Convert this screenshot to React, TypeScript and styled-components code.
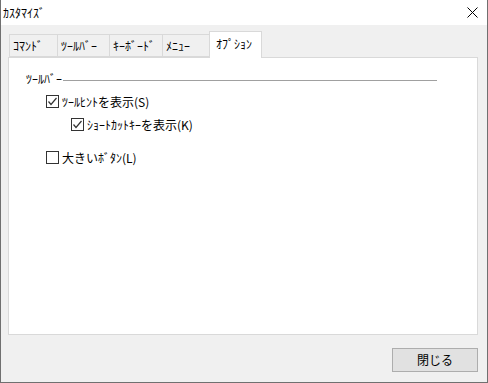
import styled, { createGlobalStyle } from "styled-components";

const GlobalStyle = createGlobalStyle`
  html, body {
    margin: 0;
    padding: 0;
    background: #ffffff;
  }
  body {
    font-family: "Noto Sans CJK JP", "Liberation Sans", sans-serif;
    font-size: 12px;
    color: #000;
  }
`;

const Window = styled.div`
  width: 488px;
  height: 383px;
  box-sizing: border-box;
  border: 1px solid #707070;
  border-top: none;
  display: flex;
  flex-direction: column;
  background: #f0f0f0;
`;

const TitleBar = styled.div`
  height: 25px;
  flex: none;
  background: #ffffff;
  display: flex;
  align-items: center;
  justify-content: space-between;
  padding: 0 9px 0 2px;
  font-size: 12px;
  line-height: 14px;
`;

const Body = styled.div`
  flex: 1;
  display: flex;
  flex-direction: column;
  padding: 6px 9px 0 7px;
`;

const TabRow = styled.div`
  display: flex;
  align-items: flex-end;
  height: 26px;
  flex: none;
  padding-left: 2px;
  position: relative;
  z-index: 1;
`;

const Tab = styled.div<{ $w: number; $active?: boolean }>`
  width: ${(p) => p.$w}px;
  height: ${(p) => (p.$active ? 27 : 23)}px;
  box-sizing: border-box;
  margin-left: -1px;
  margin-bottom: ${(p) => (p.$active ? -1 : 0)}px;
  border: 1px solid #d9d9d9;
  border-bottom: ${(p) => (p.$active ? "none" : "1px solid #d9d9d9")};
  background: ${(p) => (p.$active ? "#ffffff" : "#f0f0f0")};
  display: flex;
  align-items: ${(p) => (p.$active ? "flex-start" : "center")};
  padding: ${(p) => (p.$active ? "6px 0 0 6px" : "0 0 0 3px")};
  line-height: 12px;
  font-size: 12px;
  white-space: nowrap;
`;

const Panel = styled.div`
  height: 278px;
  flex: none;
  box-sizing: border-box;
  border: 1px solid #d9d9d9;
  background: #ffffff;
  padding: 15px 40px 0 17px;
  display: flex;
  flex-direction: column;
`;

const GroupHeader = styled.div`
  display: flex;
  align-items: center;
  height: 12px;
  font-size: 12px;
  line-height: 12px;
`;

const GroupLine = styled.div`
  flex: 1;
  height: 1px;
  background: #a0a0a0;
  margin-left: 1px;
  margin-top: 3px;
`;

const CheckRow = styled.label<{ $indent: number; $top: number }>`
  display: flex;
  align-items: center;
  gap: 3px;
  margin-left: ${(p) => p.$indent}px;
  margin-top: ${(p) => p.$top}px;
  height: 13px;
  line-height: 13px;
  font-size: 12px;
`;

const Box = styled.span`
  width: 13px;
  height: 13px;
  box-sizing: border-box;
  border: 1px solid #333333;
  background: #ffffff;
  display: flex;
  align-items: center;
  justify-content: center;
  flex: none;
`;

const Footer = styled.div`
  display: flex;
  justify-content: flex-end;
  margin-top: 13px;
`;

const Button = styled.button`
  width: 86px;
  height: 24px;
  box-sizing: border-box;
  background: #e1e1e1;
  border: 1px solid #adadad;
  font-family: "Noto Sans CJK JP", "Liberation Sans", sans-serif;
  font-size: 12px;
  line-height: 12px;
  color: #000;
  padding: 0;
`;

const CloseIcon = () => (
  <svg width="11" height="11" viewBox="0 0 11 11">
    <path d="M0.5 0.5 L10.5 10.5 M10.5 0.5 L0.5 10.5" stroke="#000" strokeWidth="1" />
  </svg>
);

const Check = ({ on }: { on: boolean }) => (
  <Box>
    {on && (
      <svg width="11" height="11" viewBox="0 0 11 11">
        <polyline points="1.5,5.5 4,8.5 9.5,2" fill="none" stroke="#333" strokeWidth="1.2" />
      </svg>
    )}
  </Box>
);

const tabs = [
  { label: "ｺﾏﾝﾄﾞ", w: 49 },
  { label: "ﾂｰﾙﾊﾞｰ", w: 53 },
  { label: "ｷｰﾎﾞｰﾄﾞ", w: 54 },
  { label: "ﾒﾆｭｰ", w: 48 },
  { label: "ｵﾌﾟｼｮﾝ", w: 53, active: true },
];

export default function App() {
  return (
    <>
      <GlobalStyle />
      <Window>
        <TitleBar>
          <span>ｶｽﾀﾏｲｽﾞ</span>
          <CloseIcon />
        </TitleBar>
        <Body>
          <TabRow>
            {tabs.map((t) => (
              <Tab key={t.label} $w={t.w} $active={t.active}>
                {t.label}
              </Tab>
            ))}
          </TabRow>
          <Panel>
            <GroupHeader>
              <span>ﾂｰﾙﾊﾞｰ</span>
              <GroupLine />
            </GroupHeader>
            <CheckRow $indent={20} $top={10}>
              <Check on />
              <span>ﾂｰﾙﾋﾝﾄを表示(S)</span>
            </CheckRow>
            <CheckRow $indent={45} $top={10}>
              <Check on />
              <span>ｼｮｰﾄｶｯﾄｷｰを表示(K)</span>
            </CheckRow>
            <CheckRow $indent={20} $top={20}>
              <Check on={false} />
              <span>大きいﾎﾞﾀﾝ(L)</span>
            </CheckRow>
          </Panel>
          <Footer>
            <Button>閉じる</Button>
          </Footer>
        </Body>
      </Window>
    </>
  );
}
